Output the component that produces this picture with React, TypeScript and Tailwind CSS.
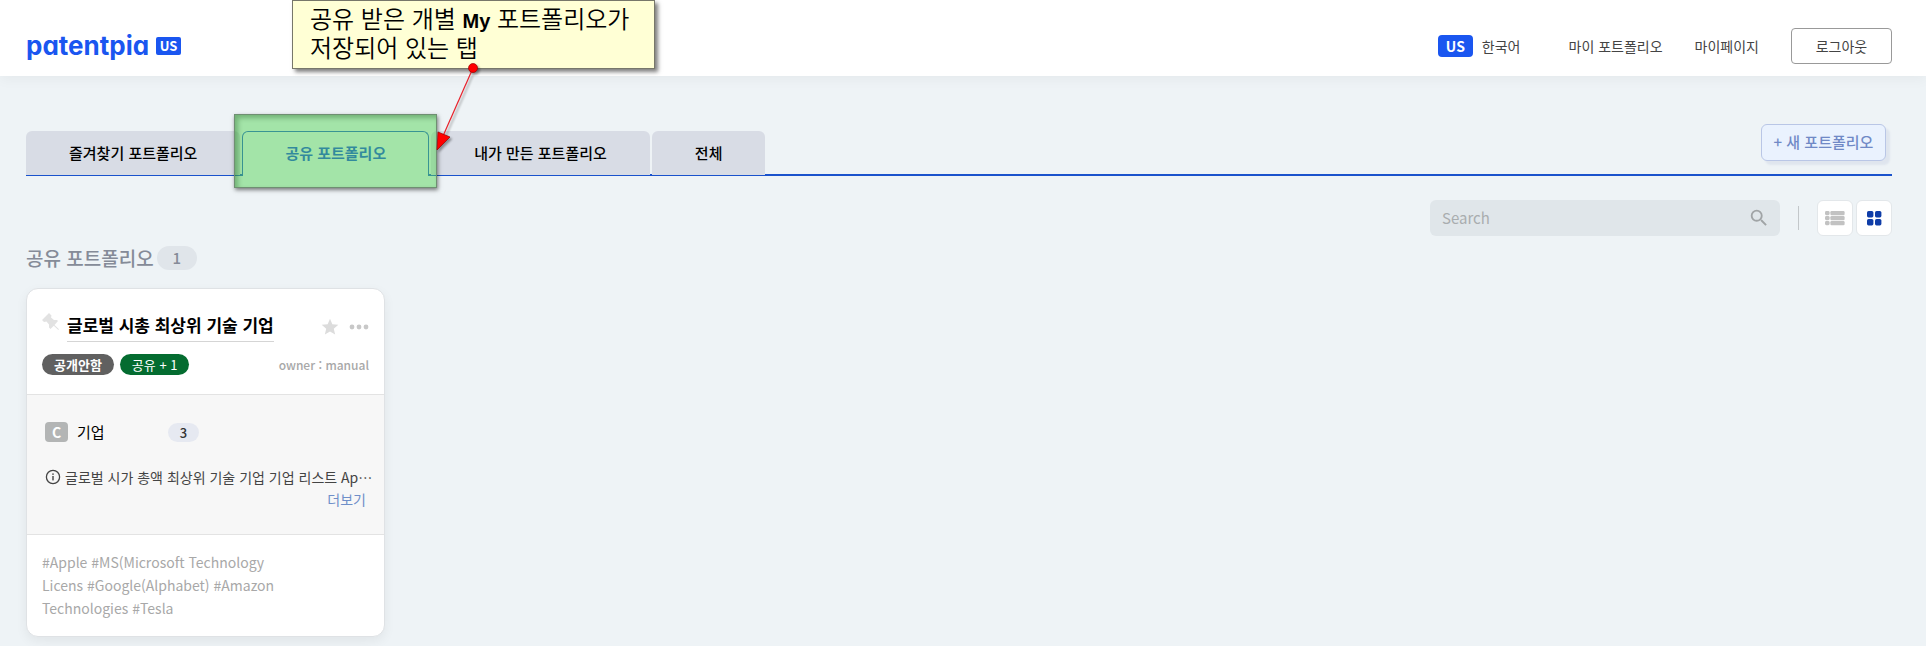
import { useState } from 'react';

import clsx from 'clsx';

const tabs = ['즐겨찾기 포트폴리오', '공유 포트폴리오', '내가 만든 포트폴리오', '전체'];

function SearchIcon() {
    return (
        <svg viewBox="0 0 24 24" className="size-[22px] fill-[#a0a4a6]" aria-hidden="true">
            <path d="M15.5 14h-.79l-.28-.27A6.47 6.47 0 0 0 16 9.5 6.5 6.5 0 1 0 9.5 16c1.61 0 3.09-.59 4.23-1.57l.27.28v.79l5 4.99L20.49 19l-4.99-5zm-6 0a4.5 4.5 0 1 1 0-9 4.5 4.5 0 0 1 0 9z" />
        </svg>
    );
}

function ListIcon() {
    return (
        <svg viewBox="0 0 20 16" className="h-4 w-5 fill-[#c2c2c2]" aria-hidden="true">
            {[0, 5, 10].map((y) => (
                <g key={y}>
                    <rect x="0" y={y + 1} width="4.6" height="4.2" rx="1.4" />
                    <rect x="5.4" y={y + 1} width="14.2" height="4.2" rx="1.2" />
                </g>
            ))}
        </svg>
    );
}

function GridIcon() {
    return (
        <svg viewBox="0 0 16 16" className="size-4 fill-[#0f3da8]" aria-hidden="true">
            <rect x="1" y="1" width="6.4" height="6.4" rx="1.6" />
            <rect x="9" y="1" width="6.4" height="6.4" rx="1.6" />
            <rect x="1" y="9" width="6.4" height="6.4" rx="1.6" />
            <rect x="9" y="9" width="6.4" height="6.4" rx="1.6" />
        </svg>
    );
}

function PinIcon() {
    return (
        <svg viewBox="0 0 18 18" className="size-[18px] fill-[#e2e2e2]" aria-hidden="true">
            <path d="M7 0 9.500 2.500 9 4.500l3 2.500 3 0 1 1-3.500 4 4.500 4.200-.7.8-4.500-4.300L8.500 16 7 14.500l0-3L4.500 8.500 2 9 0 7z" />
        </svg>
    );
}

function StarIcon() {
    return (
        <svg viewBox="0 0 24 24" className="size-5 fill-[#dcdcdc]" aria-hidden="true">
            <path d="M12 17.27 18.18 21l-1.64-7.03L22 9.24l-7.19-.61L12 2 9.19 8.63 2 9.24l5.46 4.73L5.82 21z" />
        </svg>
    );
}

function InfoIcon() {
    return (
        <svg viewBox="0 0 16 16" className="size-4 shrink-0" aria-hidden="true">
            <circle cx="8" cy="8" r="6.6" fill="none" stroke="#444" strokeWidth="1.3" />
            <rect x="7.3" y="7" width="1.4" height="4.4" fill="#444" />
            <rect x="7.3" y="4.4" width="1.4" height="1.5" fill="#444" />
        </svg>
    );
}

function Header() {
    return (
        <header className="relative flex h-[76px] items-end justify-between bg-white pr-[34px] pb-3 pl-[26px] shadow-[0_4px_12px_rgba(0,0,0,0.04)]">
            <a href="#" className="flex h-9 items-center gap-[7px] text-[#1a56f0]">
                <span className="font-[Inter,sans-serif] text-[26px] leading-8 font-bold [font-feature-settings:'cv11']">
                    patentpia
                </span>
                <span className="w-[25px] rounded-xs bg-[#1a56f0] text-center text-[13px] leading-[18px] font-bold text-white">
                    US
                </span>
            </a>
            <nav className="flex items-center text-sm text-[#444]">
                <a href="#" className="flex items-center gap-[9px]">
                    <span className="w-[35px] rounded-sm bg-[#1a56f0] text-center leading-[22px] font-bold text-white">
                        US
                    </span>
                    한국어
                </a>
                <a href="#" className="ml-12">
                    마이 포트폴리오
                </a>
                <a href="#" className="ml-8">
                    마이페이지
                </a>
                <button
                    type="button"
                    className="ml-8 h-9 w-[101px] rounded-sm border border-[#999] bg-white"
                >
                    로그아웃
                </button>
            </nav>
        </header>
    );
}

function PortfolioCard() {
    return (
        <article className="w-[359px] overflow-hidden rounded-xl border border-[#dfe2e5] bg-white shadow-[0_4px_12px_rgba(0,0,0,0.06)]">
            <div className="h-[105px] px-[15px] pt-5">
                <div className="flex items-start">
                    <button type="button" aria-label="고정" className="mt-1 mr-[7px]">
                        <PinIcon />
                    </button>
                    <h3 className="border-b border-[#d5d5d5] text-[17px] leading-8 font-bold text-black">
                        글로벌 시총 최상위 기술 기업
                    </h3>
                    <div className="mt-2 ml-auto flex items-center gap-[9px]">
                        <button type="button" aria-label="즐겨찾기">
                            <StarIcon />
                        </button>
                        <button type="button" aria-label="메뉴">
                            <svg viewBox="0 0 20 6" className="h-[6px] w-5 fill-[#c8c8c8]">
                                <circle cx="3" cy="3" r="2.4" />
                                <circle cx="10" cy="3" r="2.4" />
                                <circle cx="17" cy="3" r="2.4" />
                            </svg>
                        </button>
                    </div>
                </div>
                <div className="mt-3 flex items-center gap-[6px] text-[13px] leading-[21px]">
                    <span className="rounded-full bg-[#606060] px-3 font-bold text-white">
                        공개안함
                    </span>
                    <span className="rounded-full bg-[#046c30] px-3 text-white">공유 + 1</span>
                    <span className="ml-auto text-xs font-medium text-[#a8a8a8]">
                        owner : manual
                    </span>
                </div>
            </div>
            <div className="h-[141px] border-y border-[#e3e3e3] bg-[#f7f7f7] px-[18px] pt-[27px]">
                <div className="flex items-center">
                    <span className="w-[23px] rounded-sm bg-[#b3b5b5] text-center text-sm leading-5 font-bold text-white">
                        C
                    </span>
                    <span className="ml-[9px] w-[91px] text-[15px] leading-5 text-black">기업</span>
                    <span className="w-[31px] rounded-full bg-[#e6e9f1] text-center text-[13px] leading-[19px] font-medium text-[#333]">
                        3
                    </span>
                </div>
                <p className="mt-6 flex items-center gap-1 text-sm leading-[22px] whitespace-nowrap text-[#444]">
                    <InfoIcon />
                    글로벌 시가 총액 최상위 기술 기업 기업 리스트 Ap⋯
                </p>
                <button type="button" className="ml-auto block text-sm leading-[22px] text-[#6f8fc9]">
                    더보기
                </button>
            </div>
            <p className="w-[260px] pt-4 pb-4 pl-[15px] text-sm leading-[23px] text-[#a8a8a8]">
                #Apple #MS(Microsoft Technology Licens #Google(Alphabet) #Amazon Technologies #Tesla
            </p>
        </article>
    );
}

// Note, pointer and arrow drawn over the page
function Callout() {
    return (
        <>
            <p className="absolute top-0 left-[292px] h-[69px] w-[363px] border border-[#77776a] bg-[#ffffd5] pt-[5px] pl-[17px] font-['Liberation_Sans','Noto_Sans_CJK_KR',sans-serif] text-2xl leading-7 font-[350] whitespace-nowrap text-black shadow-[3px_3px_4px_rgba(0,0,0,0.5)]">
                공유 받은 개별 <b className="text-xl leading-7 font-bold">My</b> 포트폴리오가
                <br />
                저장되어 있는 탭
            </p>
            <svg
                viewBox="0 0 60 96"
                className="absolute top-[60px] left-[428px] z-20 h-24 w-[60px] drop-shadow-[2px_2px_1px_rgba(0,0,0,0.35)]"
                aria-hidden="true"
            >
                <path d="M45 8 15 76" stroke="#e8202a" strokeWidth="1.2" />
                <circle cx="45" cy="8" r="4.5" fill="#f00" stroke="#900" strokeWidth=".7" />
                <path d="M9 90 10 72 22 77z" fill="#f00" stroke="#900" strokeWidth=".7" />
            </svg>
        </>
    );
}

export default function App() {
    const [tab, setTab] = useState(tabs[1]);
    const [view, setView] = useState('grid');

    return (
        <div
            lang="ko"
            className="relative min-h-screen bg-[#eef3f6] font-['Noto_Sans_CJK_KR',sans-serif]"
        >
            <Header />
            <main className="pt-12 pr-[34px] pb-2 pl-[26px]">
                <div className="flex items-end justify-between border-b-2 border-[#1a52cc]">
                    <div className="-mb-px flex items-end gap-[2px]" role="tablist">
                        {tabs.map((name) => (
                            <button
                                key={name}
                                type="button"
                                role="tab"
                                aria-selected={tab === name}
                                onClick={() => setTab(name)}
                                className={clsx(
                                    'relative rounded-t-md text-[15px]',
                                    tab === name
                                        ? '-mb-px h-[45px] border border-b-0 border-[#1a52cc] bg-[#eef3f6] px-[42px] pb-[2px] font-bold text-[#0d3ee0]'
                                        : 'h-11 bg-[#d8dce5] px-[43px] font-medium text-black',
                                )}
                            >
                                {name}
                                {name === tabs[1] && (
                                    <span className="absolute -top-[18px] -right-[9px] -bottom-3 -left-[9px] z-10 border border-[#6f8f72] bg-[#58d55a]/50 shadow-[1px_2px_4px_rgba(0,0,0,0.5),inset_3px_3px_5px_rgba(0,60,0,0.3)]" />
                                )}
                            </button>
                        ))}
                    </div>
                    <button
                        type="button"
                        className="mr-[6px] mb-[13px] h-[37px] w-[125px] rounded-md border border-[#b9c6e6] bg-[#eaf2fe] text-[15px] font-medium whitespace-nowrap text-[#7089c6] shadow-[4px_4px_2px_#dfe5ee]"
                    >
                        + 새 포트폴리오
                    </button>
                </div>

                <div className="mt-6 flex items-center justify-end">
                    <label className="flex h-9 w-[350px] items-center rounded-md bg-[#e0e6ea] pr-[10px] pl-3">
                        <input
                            type="search"
                            placeholder="Search"
                            aria-label="Search"
                            className="min-w-0 flex-1 bg-transparent text-[15px] outline-none placeholder:text-[#a9adaf]"
                        />
                        <SearchIcon />
                    </label>
                    <span className="mx-[18px] h-6 w-px bg-[#c3c7ca]" />
                    <div className="flex gap-[3px]">
                        <button
                            type="button"
                            aria-label="목록"
                            onClick={() => setView('list')}
                            aria-pressed={view === 'list'}
                            className="flex size-9 items-center justify-center rounded-md border border-[#e3e7ea] bg-white"
                        >
                            <ListIcon />
                        </button>
                        <button
                            type="button"
                            aria-label="격자"
                            onClick={() => setView('grid')}
                            aria-pressed={view === 'grid'}
                            className="flex size-9 items-center justify-center rounded-md border border-[#e3e7ea] bg-white"
                        >
                            <GridIcon />
                        </button>
                    </div>
                </div>

                <h2 className="mt-2 mb-4 flex items-center gap-[3px] text-[19px] leading-7 font-medium text-[#858b98]">
                    공유 포트폴리오
                    <span className="w-10 rounded-full bg-[#e0e5ea] text-center text-[15px] leading-6">
                        1
                    </span>
                </h2>

                <PortfolioCard />
            </main>
            <Callout />
        </div>
    );
}
